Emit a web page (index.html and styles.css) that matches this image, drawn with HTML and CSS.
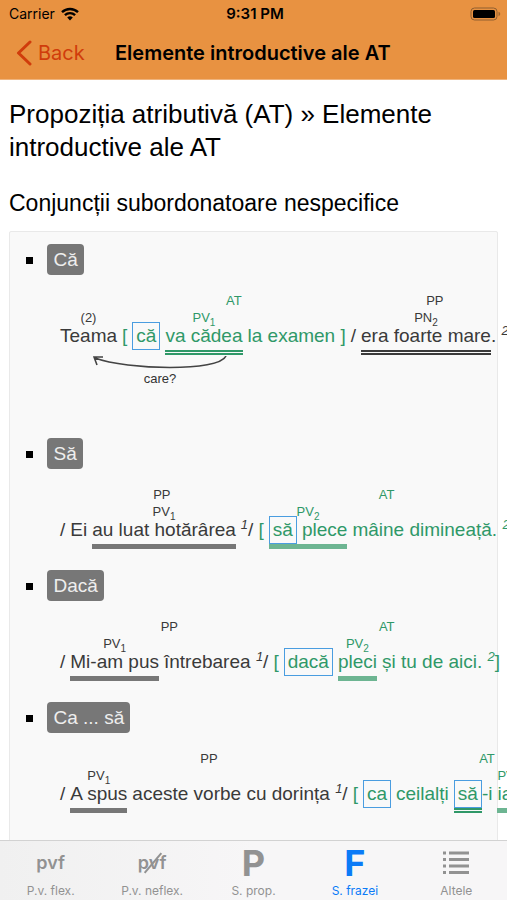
FILE: index.html
```html
<!DOCTYPE html>
<html lang="ro">
<head>
    <meta charset="UTF-8">
    <meta name="viewport" content="width=device-width, initial-scale=1.0">
    <title>Elemente introductive ale AT</title>
    <link rel="stylesheet" href="styles.css">
</head>
<body>

    <header class="top">
        <div class="status-bar">
            <span class="carrier">Carrier
                <svg width="18" height="14" viewBox="0 0 18 14" aria-hidden="true">
                    <path d="M1 5.2a11.5 11.5 0 0 1 16 0M3.9 8.2a7.4 7.4 0 0 1 10.2 0" fill="none" stroke="#000" stroke-width="2.4"/>
                    <path d="M9 13.4 6.2 10.5a4 4 0 0 1 5.6 0z"/>
                </svg>
            </span>
            <span class="time">9:31 PM</span>
            <svg class="battery" width="31" height="14" viewBox="0 0 31 14" aria-hidden="true">
                <rect x="1" y="1" width="26" height="12" rx="3.5" fill="none" stroke="#8f5f31"/>
                <rect x="3" y="3" width="22" height="8" rx="1.5"/>
                <path d="M28.5 4.8v4.4q1.8-.6 1.8-2.2t-1.8-2.2z" fill="#a0672f"/>
            </svg>
        </div>
        <nav class="nav-bar">
            <a href="#" class="back">
                <svg width="16" height="26" viewBox="0 0 16 26" aria-hidden="true">
                    <path d="M14 2 2.5 13 14 24" fill="none" stroke="#d03c0b" stroke-width="3" stroke-linecap="round" stroke-linejoin="round"/>
                </svg>
                Back
            </a>
            <span class="nav-title">Elemente introductive ale AT</span>
        </nav>
    </header>

    <main class="content">
        <h1>Propoziția atributivă (AT) » Elemente introductive ale AT</h1>
        <h2>Conjuncții subordonatoare nespecifice</h2>

        <ul class="panel">
            <li class="item">
                <span class="badge">Că</span>
                <div class="sentence">
                    <span class="part"><span class="tag">(2)</span><span class="word">Teama</span></span>
                    <span class="clause at">
                        <span class="clause-tag">AT</span>
                        <span class="words">
                            <span class="word">[</span>
                            <span class="box">că</span>
                            <span class="part"><span class="tag">PV<sub>1</sub></span><span class="word double">va cădea</span></span>
                            <span class="word">la examen ]</span>
                        </span>
                    </span>
                    <span class="word">/</span>
                    <span class="clause">
                        <span class="clause-tag">PP</span>
                        <span class="words">
                            <span class="part"><span class="tag">PN<sub>2</sub></span><span class="word double">era foarte mare</span></span>
                            <span class="word tight">. <sup>2</sup></span>
                        </span>
                    </span>
                </div>
                <!-- Săgeata întrebării -->
                <div class="question">
                    <svg width="134" height="14" viewBox="0 0 134 14" aria-hidden="true">
                        <path d="M133 0C126 16 34 14 2 2M4 9 1 1l9 0" fill="none" stroke="#444" stroke-width="1.6"/>
                    </svg>
                    <span>care?</span>
                </div>
            </li>

            <li class="item">
                <span class="badge">Să</span>
                <div class="sentence">
                    <span class="word">/</span>
                    <span class="clause">
                        <span class="clause-tag">PP</span>
                        <span class="words">
                            <span class="word">Ei</span>
                            <span class="part"><span class="tag">PV<sub>1</sub></span><span class="word line">au luat hotărârea</span></span>
                            <span class="word"><sup>1</sup>/</span>
                        </span>
                    </span>
                    <span class="clause at">
                        <span class="clause-tag">AT</span>
                        <span class="words">
                            <span class="word">[</span>
                            <span class="part"><span class="tag">PV<sub>2</sub></span><span class="word line"><span class="box">să</span> plece</span></span>
                            <span class="word">mâine dimineață. <sup>2</sup>]</span>
                        </span>
                    </span>
                </div>
            </li>

            <li class="item">
                <span class="badge">Dacă</span>
                <div class="sentence">
                    <span class="word">/</span>
                    <span class="clause">
                        <span class="clause-tag">PP</span>
                        <span class="words">
                            <span class="part"><span class="tag">PV<sub>1</sub></span><span class="word line">Mi-am pus</span></span>
                            <span class="word">întrebarea <sup>1</sup>/</span>
                        </span>
                    </span>
                    <span class="clause at">
                        <span class="clause-tag">AT</span>
                        <span class="words">
                            <span class="word">[</span>
                            <span class="box">dacă</span>
                            <span class="part"><span class="tag">PV<sub>2</sub></span><span class="word line">pleci</span></span>
                            <span class="word">și tu de aici. <sup>2</sup>]</span>
                        </span>
                    </span>
                </div>
            </li>

            <li class="item">
                <span class="badge">Ca ... să</span>
                <div class="sentence">
                    <span class="word">/</span>
                    <span class="clause">
                        <span class="clause-tag">PP</span>
                        <span class="words">
                            <span class="part"><span class="tag">PV<sub>1</sub></span><span class="word line">A spus</span></span>
                            <span class="word">aceste vorbe cu dorința <sup>1</sup>/</span>
                        </span>
                    </span>
                    <span class="clause at">
                        <span class="clause-tag">AT</span>
                        <span class="words">
                            <span class="word">[</span>
                            <span class="box">ca</span>
                            <span class="word">ceilalți</span>
                            <span class="word double"><span class="box">să</span></span>
                            <span class="word tight">-i</span>
                            <span class="part"><span class="tag">PV<sub>2</sub></span><span class="word line">ia</span></span>
                            <span class="word">la munte. <sup>2</sup>]</span>
                        </span>
                    </span>
                </div>
            </li>
        </ul>
    </main>

    <nav class="tab-bar">
        <a href="#" class="tab">
            <span class="tab-icon small">pvf</span>
            P.v. flex.
        </a>
        <a href="#" class="tab">
            <span class="tab-icon small struck">pvf</span>
            P.v. neflex.
        </a>
        <a href="#" class="tab">
            <span class="tab-icon">P</span>
            S. prop.
        </a>
        <a href="#" class="tab active">
            <span class="tab-icon">F</span>
            S. frazei
        </a>
        <a href="#" class="tab">
            <span class="tab-icon">
                <svg width="28" height="26" viewBox="0 0 28 26" aria-hidden="true">
                    <path d="M1 3h3M7 3h20M1 9.500h3M7 9.500h20M1 16h3M7 16h20M1 22.500h3M7 22.500h20" stroke="#929292" stroke-width="3"/>
                </svg>
            </span>
            Altele
        </a>
    </nav>

</body>
</html>
```
FILE: styles.css
```css
* {
    box-sizing: border-box;
}

body {
    margin: 0;
    height: 100vh;
    display: flex;
    flex-direction: column;
    font-family: "Liberation Sans", Arial, sans-serif;
    color: #000;
    background-color: #fff;
}

a {
    text-decoration: none;
}

/* Header */
.top {
    background-color: #e89241;
    border-bottom: 1px solid #efb47d;
    font-family: Inter, sans-serif;
}

.status-bar {
    display: grid;
    grid-template-columns: 1fr auto 1fr;
    align-items: center;
    height: 27px;
    padding: 0 6px 0 9px;
    font-size: 14px;
}

.carrier {
    display: flex;
    align-items: center;
    gap: 6px;
}

.time {
    font-size: 15px;
    font-weight: 600;
}

.battery {
    justify-self: end;
}

.nav-bar {
    display: flex;
    align-items: center;
    height: 52px;
    padding: 0 16px;
}

.back {
    display: flex;
    align-items: center;
    gap: 6px;
    width: 99px;
    font-size: 20px;
    color: #d03c0b;
}

.nav-title {
    font-size: 20px;
    font-weight: 600;
}

/* Content */
.content {
    flex: 1;
    min-height: 0;
    padding: 18px 9px 0;
    overflow-x: hidden;
    overflow-y: auto;
    scrollbar-width: none;
}

h1, h2 {
    margin: 0;
    font-weight: 400;
}

h1 {
    font-size: 26px;
    line-height: 33px;
}

h2 {
    margin: 24px 0 13px;
    font-size: 23px;
    line-height: 30px;
}

.panel {
    margin: 0;
    padding: 12px 0 24px 37px;
    list-style: none;
    background-color: #f9f9f9;
    border: 1px solid #e9e9e9;
    border-radius: 2px;
}

.item {
    padding-bottom: 21px;
}

.item::before {
    content: "";
    display: inline-block;
    width: 7px;
    height: 7px;
    margin: 13px 10px 0 -21px;
    vertical-align: top;
    background-color: #000;
}

.badge {
    display: inline-block;
    padding: 0 6px;
    border-radius: 4px;
    font-size: 19px;
    line-height: 31px;
    vertical-align: top;
    color: #eee;
    background-color: #777;
}

/* Sentence diagram */
.sentence, .words {
    display: flex;
    align-items: flex-end;
    gap: 5px;
    white-space: nowrap;
}

.sentence {
    margin: 17px 0 0 13px;
    font-size: 19px;
    color: #3a3a3a;
}

.clause, .part {
    display: flex;
    flex: none;
    flex-direction: column;
}

.clause-tag, .tag {
    font-size: 13px;
    line-height: 17px;
    text-align: center;
}

.tag {
    height: 13px;
}

.at {
    color: #2f9868;
}

.word {
    flex: none;
    height: 33px;
    line-height: 28px;
    border-bottom: 5px solid transparent;
}

.double {
    border-bottom: 5px double;
}

.line {
    border-bottom-color: #777;
}

.at .line {
    border-bottom-color: #6db592;
}

.tight {
    margin-left: -5px;
}

.box {
    display: inline-block;
    flex: none;
    height: 28px;
    padding: 0 3px;
    margin-bottom: 5px;
    line-height: 26px;
    border: 1px solid #4a9de0;
}

.word .box {
    margin-bottom: 0;
    vertical-align: top;
}

sup {
    font-size: 13px;
    font-style: italic;
    line-height: 0;
}

sub {
    font-size: 10px;
    line-height: 0;
}

.question {
    display: flex;
    flex-direction: column;
    align-items: center;
    width: 134px;
    margin: 1px 0 30px 46px;
    font-size: 13px;
    line-height: 17px;
    color: #333;
}

/* Tab bar */
.tab-bar {
    display: flex;
    height: 60px;
    border-top: 1px solid #d2d2d2;
    background: linear-gradient(to right, #f0f0f0, #f7f6f7 50%);
    font-family: Inter, sans-serif;
}

.tab {
    flex: 1;
    display: flex;
    flex-direction: column;
    align-items: center;
    font-size: 12px;
    line-height: 14px;
    color: #929292;
}

.tab-icon {
    position: relative;
    display: flex;
    align-items: center;
    height: 43px;
    font-size: 36px;
    font-weight: 700;
}

.small {
    font-size: 18px;
    font-weight: 600;
}

.struck::after {
    content: "";
    position: absolute;
    left: 2px;
    top: 21px;
    width: 26px;
    height: 2px;
    background-color: #929292;
    transform: rotate(-50deg);
}

.active {
    color: #0b7bf7;
}
```
